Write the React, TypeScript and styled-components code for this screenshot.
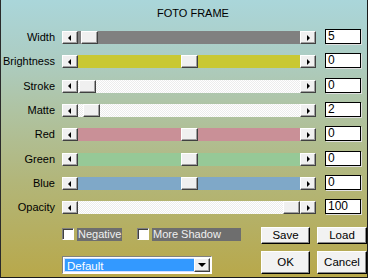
import React from "react";
import styled, { createGlobalStyle } from "styled-components";

const Global = createGlobalStyle`
  html, body { margin: 0; padding: 0; }
  body { font-family: "Liberation Sans", Arial, sans-serif; font-size: 11px; }
`;

const Frame = styled.div`
  width: 368px;
  height: 278px;
  box-sizing: border-box;
  border-left: 1px solid #2a2a2a;
  border-right: 1px solid #1a1a1a;
  border-bottom: 1px solid #1a1a1a;
  background: linear-gradient(180deg, #aad6da 0%, #accdc4 20%, #afc3a2 40%, #b2b67a 65%, #b8a84a 100%);
  display: flex;
  flex-direction: column;
  color: #000;
`;

const Title = styled.div`
  height: 29px;
  box-sizing: border-box;
  padding: 6px 0 0 18px;
  line-height: 14px;
  text-align: center;
  font-size: 11px;
`;

const Rows = styled.div`
  display: grid;
  grid-auto-rows: 24.35px;
`;

const Row = styled.div`
  display: flex;
  align-items: flex-start;
  margin-left: -1px;
`;

const Label = styled.div`
  width: 55px;
  text-align: right;
  margin-right: 7px;
  padding-top: 2px;
  line-height: 13px;
`;

const Scroll = styled.div`
  margin-top: 2px;
  width: 254px;
  height: 13px;
  display: flex;
`;

const ArrowBtn = styled.div`
  width: 16px;
  height: 13px;
  box-sizing: border-box;
  background: #f0f0f0;
  border: 1px solid;
  border-color: #fff #404040 #404040 #fff;
  box-shadow: inset -1px -1px #a0a0a0;
  display: flex;
  align-items: center;
  justify-content: center;
  flex: none;
`;

const TriLeft = styled.div`
  width: 0;
  height: 0;
  border-top: 3px solid transparent;
  border-bottom: 3px solid transparent;
  border-right: 3px solid #000;
  margin-left: -1px;
`;

const TriRight = styled.div`
  width: 0;
  height: 0;
  border-top: 3px solid transparent;
  border-bottom: 3px solid transparent;
  border-left: 3px solid #000;
  margin-right: -1px;
`;

const Track = styled.div<{ $bg: string; $dither?: boolean }>`
  flex: 1;
  height: 13px;
  display: flex;
  background: ${(p) =>
    p.$dither
      ? "repeating-conic-gradient(#ffffff 0 25%, #ececec 0 50%) 0 0 / 2px 2px"
      : p.$bg};
`;

const Thumb = styled.div<{ $offset: number }>`
  margin-left: ${(p) => p.$offset}px;
  width: 17px;
  height: 13px;
  box-sizing: border-box;
  background: #f0f0f0;
  border: 1px solid;
  border-color: #fff #404040 #404040 #fff;
  box-shadow: inset -1px -1px #a0a0a0;
`;

const ValueBox = styled.div`
  margin-left: 9px;
  width: 36px;
  height: 15px;
  box-sizing: border-box;
  background: #fff;
  border: 1px solid #000;
  box-shadow: 1px 1px 0 #e0e0e0;
  font-size: 12px;
  line-height: 13px;
  padding-left: 2px;
`;

const Bottom = styled.div`
  margin-top: 3px;
  padding-left: 61px;
  display: grid;
  grid-template-columns: 192px 49px 50px;
  grid-template-rows: 17px 23px;
  column-gap: 7px;
  row-gap: 7px;
`;

const Checks = styled.div`
  display: flex;
  align-items: center;
  margin-top: 1px;
  height: 13px;
`;

const CheckBox = styled.div`
  width: 12px;
  height: 12px;
  box-sizing: border-box;
  background: #fff;
  border: 1px solid;
  border-color: #808080 #fff #fff #808080;
  box-shadow: inset 1px 1px #404040;
  flex: none;
`;

const CheckLabel = styled.div<{ $w: number; $gapAfter?: number }>`
  margin-left: 3px;
  width: ${(p) => p.$w}px;
  height: 13px;
  line-height: 13px;
  box-sizing: border-box;
  padding-left: 1px;
  background: #6e6e6e;
  color: #f0f0f0;
  font-size: 11px;
  margin-right: ${(p) => p.$gapAfter ?? 0}px;
`;

const Button = styled.div`
  box-sizing: border-box;
  background: #f2f2f2;
  border: 1px solid;
  border-color: #fff #000 #000 #fff;
  box-shadow: inset -1px -1px #8a8a8a;
  display: flex;
  align-items: center;
  justify-content: center;
  font-size: 11.5px;
`;

const Select = styled.div`
  margin-top: 5px;
  width: 150px;
  height: 18px;
  box-sizing: border-box;
  border: 1px solid;
  border-color: #808080 #fff #fff #808080;
  background: #fff;
  padding: 1px;
  display: flex;
`;

const SelectField = styled.div`
  flex: 1;
  background: #3399ff;
  color: #fff;
  font-size: 11.5px;
  line-height: 14px;
  padding-left: 2px;
  border: 1px solid #d0e0ff;
  border-right: none;
`;

const SelectBtn = styled.div`
  width: 16px;
  box-sizing: border-box;
  background: #f0f0f0;
  border: 1px solid;
  border-color: #fff #404040 #404040 #fff;
  box-shadow: inset -1px -1px #a0a0a0;
  display: flex;
  align-items: center;
  justify-content: center;
`;

const TriDown = styled.div`
  width: 0;
  height: 0;
  border-left: 4px solid transparent;
  border-right: 4px solid transparent;
  border-top: 4px solid #000;
`;

const rows = [
  { label: "Width", color: "#808080", offset: 3, value: "5" },
  { label: "Brightness", color: "#c9c832", offset: 103, value: "0" },
  { label: "Stroke", color: "", dither: true, offset: 1, value: "0" },
  { label: "Matte", color: "", dither: true, offset: 5, value: "2" },
  { label: "Red", color: "#c99097", offset: 103, value: "0" },
  { label: "Green", color: "#96c997", offset: 103, value: "0" },
  { label: "Blue", color: "#7fa8c8", offset: 103, value: "0" },
  { label: "Opacity", color: "", dither: true, offset: 205, value: "100" },
];

export default function App() {
  return (
    <>
      <Global />
      <Frame>
        <Title>FOTO FRAME</Title>
        <Rows>
          {rows.map((r) => (
            <Row key={r.label}>
              <Label>{r.label}</Label>
              <Scroll>
                <ArrowBtn>
                  <TriLeft />
                </ArrowBtn>
                <Track $bg={r.color} $dither={r.dither}>
                  <Thumb $offset={r.offset} />
                </Track>
                <ArrowBtn>
                  <TriRight />
                </ArrowBtn>
              </Scroll>
              <ValueBox>{r.value}</ValueBox>
            </Row>
          ))}
        </Rows>
        <Bottom>
          <Checks>
            <CheckBox />
            <CheckLabel $w={45} $gapAfter={15}>Negative</CheckLabel>
            <CheckBox />
            <CheckLabel $w={89}>More Shadow</CheckLabel>
          </Checks>
          <Button>Save</Button>
          <Button>Load</Button>
          <Select>
            <SelectField>Default</SelectField>
            <SelectBtn>
              <TriDown />
            </SelectBtn>
          </Select>
          <Button>OK</Button>
          <Button>Cancel</Button>
        </Bottom>
      </Frame>
    </>
  );
}
